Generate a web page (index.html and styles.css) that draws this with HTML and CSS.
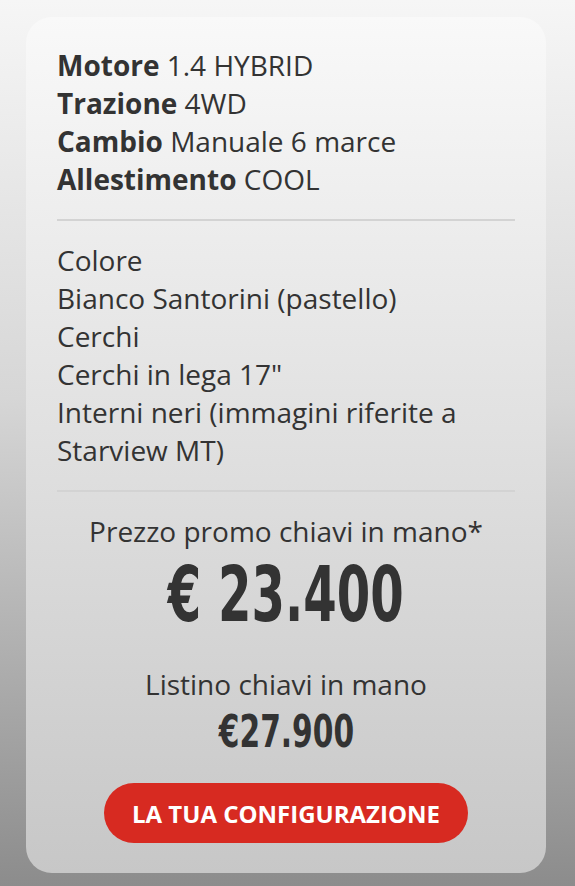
FILE: index.html
```html
<!DOCTYPE html>
<html lang="it">
<head>
<meta charset="utf-8">
<title>Configurazione</title>
<link rel="stylesheet" href="styles.css">
</head>
<body>
<main class="page">
  <section class="card">
    <div class="specs">
      <p><strong>Motore</strong> 1.4 HYBRID</p>
      <p><strong>Trazione</strong> 4WD</p>
      <p><strong>Cambio</strong> Manuale 6 marce</p>
      <p><strong>Allestimento</strong> COOL</p>
    </div>
    <hr class="divider">
    <div class="options">
      <p>Colore</p>
      <p>Bianco Santorini (pastello)</p>
      <p>Cerchi</p>
      <p>Cerchi in lega 17"</p>
      <p>Interni neri (immagini riferite a Starview MT)</p>
    </div>
    <hr class="divider">
    <div class="prices">
      <p class="price-label">Prezzo promo chiavi in mano*</p>
      <p class="price-main"><span>€ 23.400</span></p>
      <p class="price-label list-label">Listino chiavi in mano</p>
      <p class="price-list"><span>€27.900</span></p>
      <a class="cta" href="#">LA TUA CONFIGURAZIONE</a>
    </div>
  </section>
</main>
</body>
</html>
```

FILE: styles.css
```css
html, body {
  margin: 0;
  padding: 0;
}
body {
  min-height: 886px;
  background: linear-gradient(to bottom, #f6f6f6 0%, #d6d6d6 45%, #8c8c8c 100%);
  font-family: "Open Sans", "Noto Sans", sans-serif;
  color: #333333;
}
.page {
  padding: 17px 29px 13px 26px;
}
.card {
  border-radius: 26px;
  background: linear-gradient(to bottom, #f9f9f9 0%, #c7c7c7 100%);
  padding: 29px 31px 30px 31px;
  display: flex;
  flex-direction: column;
}
.specs p,
.options p {
  margin: 0;
  font-size: 28px;
  line-height: 38px;
}
.specs strong {
  font-weight: 700;
}
.divider {
  border: 0;
  height: 2px;
  background: #d3d3d3;
  margin: 21px 0 20px;
  width: 100%;
}
.prices {
  display: flex;
  flex-direction: column;
  align-items: center;
  text-align: center;
}
.price-label {
  margin: 0;
  font-size: 28px;
  line-height: 38px;
}
.price-main,
.price-list {
  margin: 0;
  font-family: "DejaVu Sans", "Liberation Sans", sans-serif;
  font-weight: 700;
  color: #333333;
}
.price-main {
  font-size: 77px;
  line-height: 90px;
}
.price-main span {
  display: inline-block;
  transform: scaleX(0.625);
}
.price-list span {
  display: inline-block;
  transform: scaleX(0.66);
}
.list-label {
  margin-top: 25px;
}
.price-list {
  font-size: 45px;
  line-height: 58px;
}
.cta {
  margin-top: 22px;
  display: flex;
  align-items: center;
  justify-content: center;
  width: 364px;
  height: 60px;
  border-radius: 30px;
  background: #d72a21;
  color: #ffffff;
  font-weight: 700;
  font-size: 24px;
  text-decoration: none;
}
```
